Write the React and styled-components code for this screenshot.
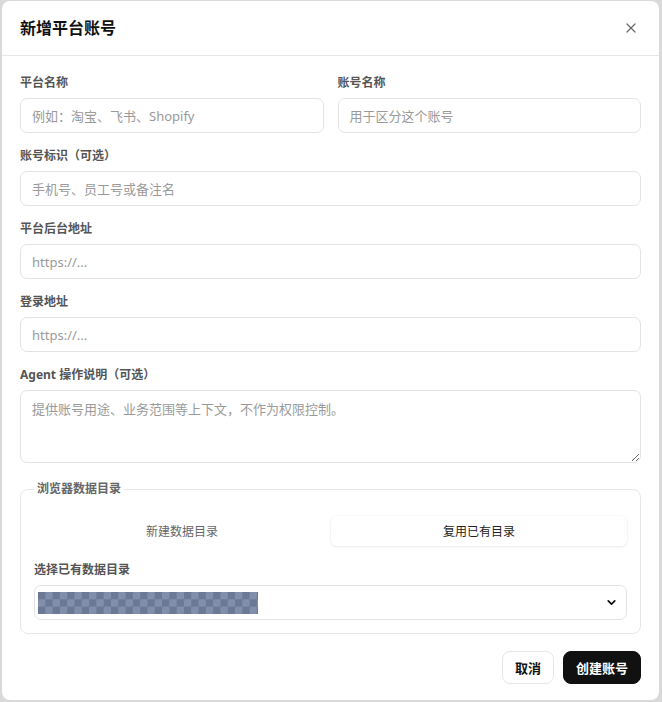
import React, { useState } from "react";
import styled, { createGlobalStyle } from "styled-components";
import { X, ChevronDown } from "lucide-react";

const GlobalStyle = createGlobalStyle`
  * { box-sizing: border-box; }
  html, body { margin: 0; padding: 0; }
  body {
    background: #d9d9d9;
    font-family: "Noto Sans", "Noto Sans CJK SC", sans-serif;
    color: #222;
    overflow: hidden;
  }
`;

const Dialog = styled.div`
  margin: 1px 2px 0;
  width: 657px;
  height: 699px;
  background: #fff;
  border-radius: 8px;
  display: flex;
  flex-direction: column;
  overflow: hidden;
`;

const Header = styled.div`
  height: 55px;
  flex: 0 0 55px;
  padding: 0 20px 0 18px;
  display: flex;
  align-items: center;
  justify-content: space-between;
  border-bottom: 1px solid #e6e6e6;
`;

const Title = styled.h2`
  margin: 0;
  font-size: 16px;
  font-weight: 700;
  color: #111;
  line-height: 1;
`;

const CloseButton = styled.button`
  border: none;
  background: none;
  padding: 0;
  display: flex;
  color: #666;
  cursor: pointer;
`;

const Body = styled.form`
  padding: 18px 18px 0;
  display: flex;
  flex-direction: column;
  gap: 14px;
`;

const Row = styled.div`
  display: grid;
  grid-template-columns: 1fr 1fr;
  gap: 14px;
`;

const Field = styled.label`
  display: flex;
  flex-direction: column;
  gap: 6px;
`;

const Label = styled.span`
  font-size: 12px;
  line-height: 18px;
  font-weight: 700;
  color: #555;
`;

const Input = styled.input`
  height: 35px;
  width: 100%;
  border: 1px solid #e3e3e3;
  border-radius: 7px;
  padding: 0 11px;
  font: inherit;
  font-size: 13px;
  color: #222;
  background: #fff;
  outline: none;
  &::placeholder { color: #9a9a9a; }
`;

const TextArea = styled.textarea`
  height: 73px;
  width: 100%;
  border: 1px solid #e3e3e3;
  border-radius: 7px;
  padding: 9px 11px;
  font: inherit;
  font-size: 13px;
  line-height: 18px;
  color: #222;
  background: #fff;
  outline: none;
  resize: vertical;
  display: block;
  &::placeholder { color: #9a9a9a; }
`;

const Group = styled.fieldset`
  margin: 3px 0 0;
  border: 1px solid #e6e6e6;
  border-radius: 8px;
  padding: 18px 13px 13px;
  display: flex;
  flex-direction: column;
`;

const Legend = styled.legend`
  padding: 0 3px;
  font-size: 12px;
  line-height: 18px;
  font-weight: 600;
  color: #666;
`;

const Segmented = styled.div`
  display: grid;
  grid-template-columns: 1fr 1fr;
  gap: 1px;
  height: 30px;
  border-radius: 7px;
  background: #fff;
`;

const Segment = styled.button`
  border: none;
  border-radius: 6px;
  font: inherit;
  font-size: 12px;
  cursor: pointer;
  background: ${(p) => (p.$active ? "#fff" : "transparent")};
  color: ${(p) => (p.$active ? "#222" : "#666")};
  box-shadow: ${(p) =>
    p.$active ? "0 1px 3px rgba(0,0,0,0.08), 0 0 0 1px rgba(0,0,0,0.015)" : "none"};
`;

const SubField = styled(Field)`
  margin-top: 15px;
  gap: 6px;
`;

const SubLabel = styled(Label)`
  font-weight: 600;
`;

const SelectBox = styled.div`
  height: 35px;
  border: 1px solid #e3e3e3;
  border-radius: 7px;
  padding: 0 8px 0 3px;
  display: flex;
  align-items: center;
  justify-content: space-between;
  color: #111;
`;

/* masked value of the chosen directory */
const Masked = styled.span`
  width: 220px;
  height: 22px;
  background-color: #6c7996;
  background-image:
    linear-gradient(45deg, #8390ab 25%, transparent 25%, transparent 75%, #8390ab 75%),
    linear-gradient(45deg, #8390ab 25%, transparent 25%, transparent 75%, #8390ab 75%);
  background-size: 14.6px 14.6px;
  background-position: 0 0, 7.3px 7.3px;
`;

const Footer = styled.div`
  display: flex;
  justify-content: flex-end;
  gap: 9px;
  padding: 17px 18px 0;
`;

const Button = styled.button`
  height: 33px;
  padding: 0 12px;
  border-radius: 8px;
  font: inherit;
  font-size: 13px;
  font-weight: 700;
  cursor: pointer;
  border: 1px solid ${(p) => (p.$primary ? "#111" : "#e6e6e6")};
  background: ${(p) => (p.$primary ? "#111" : "#fff")};
  color: ${(p) => (p.$primary ? "#fff" : "#111")};
`;

export default function App() {
  const [mode, setMode] = useState("reuse");
  return (
    <>
      <GlobalStyle />
      <Dialog>
        <Header>
          <Title>新增平台账号</Title>
          <CloseButton type="button" aria-label="关闭">
            <X size={16} strokeWidth={1.8} />
          </CloseButton>
        </Header>
        <Body onSubmit={(e) => e.preventDefault()}>
          <Row>
            <Field>
              <Label>平台名称</Label>
              <Input placeholder="例如：淘宝、飞书、Shopify" />
            </Field>
            <Field>
              <Label>账号名称</Label>
              <Input placeholder="用于区分这个账号" />
            </Field>
          </Row>
          <Field>
            <Label>账号标识（可选）</Label>
            <Input placeholder="手机号、员工号或备注名" />
          </Field>
          <Field>
            <Label>平台后台地址</Label>
            <Input placeholder="https://..." />
          </Field>
          <Field>
            <Label>登录地址</Label>
            <Input placeholder="https://..." />
          </Field>
          <Field>
            <Label>Agent 操作说明（可选）</Label>
            <TextArea placeholder="提供账号用途、业务范围等上下文，不作为权限控制。" />
          </Field>
          <Group>
            <Legend>浏览器数据目录</Legend>
            <Segmented>
              <Segment type="button" $active={mode === "new"} onClick={() => setMode("new")}>
                新建数据目录
              </Segment>
              <Segment type="button" $active={mode === "reuse"} onClick={() => setMode("reuse")}>
                复用已有目录
              </Segment>
            </Segmented>
            <SubField as="div">
              <SubLabel>选择已有数据目录</SubLabel>
              <SelectBox>
                <Masked />
                <ChevronDown size={13} strokeWidth={3.2} />
              </SelectBox>
            </SubField>
          </Group>
        </Body>
        <Footer>
          <Button type="button">取消</Button>
          <Button type="button" $primary>创建账号</Button>
        </Footer>
      </Dialog>
    </>
  );
}
